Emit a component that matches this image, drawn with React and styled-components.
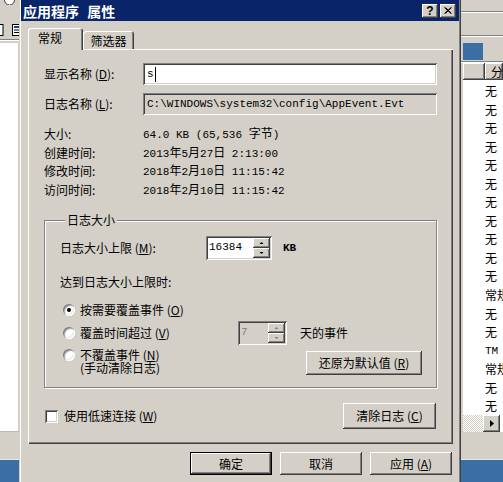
import React from "react";
import styled, { createGlobalStyle, css } from "styled-components";

const FACE = "#d4d0c8";
const CJK = `"Noto Sans CJK SC", "Noto Sans", sans-serif`;
const MONO = `"Liberation Mono", "Noto Sans CJK SC", monospace`;

const raised = css`
  box-shadow: inset -1px -1px #404040, inset 1px 1px #ffffff, inset -2px -2px #808080;
`;
const sunken = css`
  box-shadow: inset 1px 1px #808080, inset -1px -1px #ffffff, inset 2px 2px #404040,
    inset -2px -2px ${FACE};
`;

const Global = createGlobalStyle`
  html, body { margin: 0; padding: 0; background: ${FACE}; }
  body { font-family: ${CJK}; font-size: 12px; color: #000; }
  u { text-underline-offset: 1px; }
`;

const Screen = styled.div`
  display: flex;
  width: 503px;
  height: 482px;
  overflow: hidden;
  background: ${FACE};
`;

/* ---------- background window, left ---------- */
const SideLeft = styled.div`
  width: 19px;
  flex: none;
  display: flex;
  flex-direction: column;
`;
const Band = styled.div`
  height: ${(p) => p.$h}px;
  flex: none;
  display: flex;
  align-items: ${(p) => p.$align || "center"};
  gap: ${(p) => p.$gap || 0}px;
  padding-left: ${(p) => p.$pl || 0}px;
  background: ${(p) => p.$bg || FACE};
`;
const Etch = styled.div`
  height: 2px;
  flex: none;
  border-top: 1px solid #808080;
  border-bottom: 1px solid #ffffff;
  box-sizing: border-box;
`;
const WhiteList = styled.div`
  flex: none;
  height: ${(p) => p.$h}px;
  width: ${(p) => p.$w || "auto"};
  background: #fff;
`;
const Blue = styled.div`
  flex: 1;
  background: #3a6ea5;
  border-top: 1px solid #e8e8e8;
`;

/* ---------- background window, right ---------- */
const SideRight = styled.div`
  width: 42px;
  flex: none;
  display: flex;
  flex-direction: column;
  overflow: hidden;
`;
const BlueTab = styled.div`
  width: 20px;
  height: 17px;
  margin-left: 2px;
  background: #3a6ea5;
`;
const HeaderRow = styled.div`
  display: flex;
  height: 17px;
  flex: none;
  padding-left: 2px;
`;
const HeadCell = styled.div`
  ${raised};
  background: ${FACE};
  width: ${(p) => (p.$w ? p.$w + "px" : "auto")};
  flex: ${(p) => (p.$w ? "none" : 1)};
  padding-left: 6px;
  white-space: nowrap;
  overflow: hidden;
  line-height: 17px;
`;
const ListBox = styled.div`
  height: 335px;
  flex: none;
  margin-left: 2px;
  padding-top: 2px;
  box-sizing: border-box;
  background: #fff;
  overflow: hidden;
`;
const ListItem = styled.div`
  height: 18.55px;
  line-height: 18.55px;
  padding-left: 22px;
  white-space: nowrap;
  overflow: hidden;
  font-family: ${(p) => (p.$mono ? MONO : CJK)};
  font-size: ${(p) => (p.$mono ? "11px" : "12px")};
`;
const HScroll = styled.div`
  height: 17px;
  flex: none;
  display: flex;
  margin-left: 2px;
`;
const Track = styled.div`
  width: 20px;
  background: repeating-conic-gradient(#ffffff 0 25%, ${FACE} 0 50%) 0 0 / 2px 2px;
`;
const ScrollBtn = styled.div`
  ${raised};
  width: 17px;
  background: ${FACE};
  display: flex;
  align-items: center;
  justify-content: center;
`;

/* ---------- dialog ---------- */
const Dialog = styled.div`
  width: 442px;
  flex: none;
  height: 482px;
  box-sizing: border-box;
  padding: 0 2px;
  background: ${FACE};
  box-shadow: inset 1px 0 ${FACE}, inset 2px 0 #ffffff, inset -1px 0 #404040,
    inset -2px 0 #808080;
  display: flex;
  flex-direction: column;
`;
const TitleBar = styled.div`
  height: 21px;
  flex: none;
  background: #0a246a;
  display: flex;
  align-items: center;
  padding: 0 3px 0 2px;
  gap: 2px;
`;
const TitleText = styled.div`
  flex: 1;
  color: #fff;
  font-weight: 700;
  font-size: 14px;
  line-height: 16px;
  word-spacing: 5px;
  margin-top: 1px;
`;
const CapBtn = styled.div`
  ${raised};
  width: 16px;
  height: 14px;
  background: ${FACE};
  display: flex;
  align-items: center;
  justify-content: center;
  font-family: "Liberation Sans", sans-serif;
  font-weight: 700;
  font-size: 12px;
  line-height: 14px;
`;
const TabRow = styled.div`
  display: flex;
  align-items: flex-end;
  height: 22px;
  margin: 7px 0 -1px 7px;
  position: relative;
  z-index: 1;
`;
const Tab = styled.div`
  box-sizing: border-box;
  background: ${FACE};
  border-radius: 3px 3px 0 0;
  box-shadow: inset 1px 1px #ffffff, inset -1px 0 #404040, inset -2px 0 #808080;
  display: flex;
  align-items: center;
  line-height: 14px;
  ${(p) =>
    p.$active
      ? css`
          width: 55px;
          height: 22px;
          padding: 0 0 3px 10px;
        `
      : css`
          width: 51px;
          height: 18px;
          margin-bottom: 1px;
          justify-content: center;
          padding-top: 2px;
        `}
`;
const Panel = styled.div`
  width: 425px;
  height: 395px;
  flex: none;
  box-sizing: border-box;
  margin-left: 7px;
  padding: 14px 16px 0 16px;
  box-shadow: inset 1px 1px #ffffff, inset -1px -1px #404040, inset -2px -2px #808080;
  display: flex;
  flex-direction: column;
`;
const FieldRow = styled.div`
  display: flex;
  align-items: center;
  height: 22px;
  flex: none;
  margin-top: ${(p) => p.$mt || 0}px;
`;
const Label = styled.div`
  width: ${(p) => p.$w || 99}px;
  flex: none;
  line-height: 14px;
  white-space: nowrap;
`;
const TextBox = styled.div`
  ${sunken};
  flex: 1;
  height: 22px;
  box-sizing: border-box;
  padding-left: 4px;
  display: flex;
  align-items: center;
  background: ${(p) => (p.$readonly ? FACE : "#fff")};
  font-family: ${MONO};
  font-size: 11px;
  white-space: nowrap;
  overflow: hidden;
`;
const Caret = styled.span`
  width: 1px;
  height: 15px;
  background: #000;
  margin-left: 1px;
`;
const InfoGrid = styled.div`
  display: grid;
  grid-template-columns: 99px 1fr;
  grid-auto-rows: 18.5px;
  align-items: center;
  margin-top: 10px;
`;
const Value = styled.div`
  font-family: ${MONO};
  font-size: 11px;
  line-height: 14px;
  white-space: nowrap;
`;
const Han = styled.span`
  font-family: ${CJK};
  font-size: 12px;
`;
const Group = styled.fieldset`
  margin: 14px 0 0;
  padding: 0 14px 12px 15px;
  min-width: 0;
  border: 1px solid #808080;
  box-shadow: inset 1px 1px #ffffff, 1px 1px #ffffff;
`;
const Legend = styled.legend`
  margin-left: 5px;
  padding: 0 2px;
  line-height: 14px;
  background: ${FACE};
`;
const GRow = styled.div`
  display: flex;
  align-items: ${(p) => p.$align || "center"};
  height: ${(p) => p.$h}px;
  margin-top: ${(p) => p.$mt || 0}px;
  line-height: 14px;
`;
const Unit = styled.span`
  margin-left: 11px;
  font-family: ${MONO};
  font-size: 11px;
  font-weight: 700;
`;
const SpinBox = styled.div`
  ${sunken};
  width: ${(p) => p.$w}px;
  height: 24px;
  flex: none;
  box-sizing: border-box;
  padding: 2px;
  display: flex;
  background: ${(p) => (p.$disabled ? FACE : "#fff")};
`;
const SpinText = styled.span`
  flex: 1;
  padding-left: 1px;
  font-family: ${MONO};
  font-size: 11px;
  line-height: 18px;
  color: ${(p) => (p.$disabled ? "#808080" : "#000")};
`;
const SpinBtns = styled.div`
  width: 17px;
  display: flex;
  flex-direction: column;
`;
const SpinBtn = styled.div`
  ${raised};
  flex: 1;
  background: ${FACE};
  display: flex;
  align-items: center;
  justify-content: center;
`;
const RadioArea = styled.div`
  display: flex;
  align-items: ${(p) => p.$align || "center"};
  width: ${(p) => (p.$w ? p.$w + "px" : "auto")};
  flex: none;
  padding-left: 3px;
  box-sizing: border-box;
  gap: 5px;
`;
const Radio = styled.span`
  width: 12px;
  height: 12px;
  flex: none;
  margin-top: ${(p) => p.$mt || 0}px;
  border-radius: 50%;
  background: #fff;
  box-shadow: inset 1px 1px #808080, inset -1px -1px #ffffff, inset 2px 2px #b0b0b0,
    inset -2px -2px #e8e8e8;
  display: flex;
  align-items: center;
  justify-content: center;
  &::after {
    content: "";
    width: 4px;
    height: 4px;
    border-radius: 50%;
    background: ${(p) => (p.$checked ? "#000" : "transparent")};
  }
`;
const TwoLines = styled.div`
  display: flex;
  flex-direction: column;
  margin-top: -1px;
`;
const Line = styled.div`
  height: 13px;
  line-height: 13px;
  white-space: nowrap;
`;
const Btn = styled.div`
  ${(p) =>
    p.$default
      ? css`
          box-shadow: inset 0 0 0 1px #000, inset -2px -2px #404040, inset 2px 2px #ffffff,
            inset -3px -3px #808080;
        `
      : raised};
  width: ${(p) => p.$w}px;
  height: ${(p) => p.$h || 23}px;
  flex: none;
  margin: ${(p) => p.$m || 0};
  background: ${FACE};
  display: flex;
  align-items: center;
  justify-content: center;
  line-height: 14px;
  white-space: nowrap;
`;
const Footer = styled.div`
  display: flex;
  align-items: center;
  justify-content: space-between;
  height: 26px;
  margin-top: 15px;
`;
const CheckRow = styled.div`
  display: flex;
  align-items: center;
  gap: 6px;
  margin-left: 1px;
  line-height: 14px;
`;
const CheckBox = styled.span`
  ${sunken};
  width: 13px;
  height: 13px;
  background: #fff;
`;
const ButtonBar = styled.div`
  display: flex;
  justify-content: flex-end;
  gap: 8px;
  margin-top: 8px;
  padding-right: 7px;
`;

const Tri = ({ up, color = "#000" }) => (
  <svg width="5" height="4" viewBox="0 0 5 4">
    <path d={up ? "M2.5 1L0.5 3h4z" : "M0.5 1h4L2.5 3z"} fill={color} />
  </svg>
);

const Spin = ({ w, value, disabled }) => (
  <SpinBox $w={w} $disabled={disabled}>
    <SpinText $disabled={disabled}>{value}</SpinText>
    <SpinBtns>
      <SpinBtn>
        <Tri up color={disabled ? "#808080" : "#000"} />
      </SpinBtn>
      <SpinBtn>
        <Tri color={disabled ? "#808080" : "#000"} />
      </SpinBtn>
    </SpinBtns>
  </SpinBox>
);

const rightItems = [
  "无", "无", "无", "无", "无", "无", "无", "无", "无", "无", "无",
  "常规", "无", "无", "TM", "常规", "无", "无",
];

export default function App() {
  return (
    <Screen>
      <Global />
      <SideLeft>
        <Band $h={20} $align="flex-start" $pl={4}>
          <svg width="11" height="5" viewBox="0 0 11 5">
            <path d="M0.5 0 A5 5 0 0 0 10.5 0" fill="#fff" stroke="#404040" />
          </svg>
        </Band>
        <Band $h={19} $gap={8}>
          <svg width="4" height="12" viewBox="0 0 4 12">
            <rect x="-1" y="0.5" width="4" height="11" fill="#fff" stroke="#000" />
          </svg>
          <svg width="7" height="12" viewBox="0 0 7 12">
            <rect x="0.5" y="0.5" width="7" height="11" fill="#fff" stroke="#000" />
            <rect x="2" y="2" width="5" height="2" fill="#1f3f9f" />
            <rect x="2" y="5.5" width="5" height="1" fill="#000" />
            <rect x="2" y="8" width="5" height="1" fill="#000" />
          </svg>
        </Band>
        <Etch />
        <Band $h={2} />
        <Band $h={388}>
          <WhiteList $h={388} $w="18px" />
        </Band>
        <Band $h={1} $bg="#b8b8b8" />
        <Band $h={27} />
        <Blue />
      </SideLeft>

      <Dialog>
        <TitleBar>
          <TitleText>应用程序 属性</TitleText>
          <CapBtn>?</CapBtn>
          <CapBtn>
            <svg width="8" height="7" viewBox="0 0 8 7">
              <path d="M0.5 0.5l6.5 6M1.5 0.5l6 6M7 0.5l-6.5 6M7.5 0.5l-6 6" stroke="#000" strokeWidth="1" />
            </svg>
          </CapBtn>
        </TitleBar>

        <TabRow>
          <Tab $active>常规</Tab>
          <Tab>筛选器</Tab>
        </TabRow>

        <Panel>
          <FieldRow>
            <Label>
              显示名称 (<u>D</u>):
            </Label>
            <TextBox>
              s<Caret />
            </TextBox>
          </FieldRow>
          <FieldRow $mt={8}>
            <Label>
              日志名称 (<u>L</u>):
            </Label>
            <TextBox $readonly>C:\WINDOWS\system32\config\AppEvent.Evt</TextBox>
          </FieldRow>

          <InfoGrid>
            <Label>大小:</Label>
            <Value>
              64.0 KB (65,536 <Han>字节</Han>)
            </Value>
            <Label>创建时间:</Label>
            <Value>
              2013<Han>年</Han>5<Han>月</Han>27<Han>日</Han> 2:13:00
            </Value>
            <Label>修改时间:</Label>
            <Value>
              2018<Han>年</Han>2<Han>月</Han>10<Han>日</Han> 11:15:42
            </Value>
            <Label>访问时间:</Label>
            <Value>
              2018<Han>年</Han>2<Han>月</Han>10<Han>日</Han> 11:15:42
            </Value>
          </InfoGrid>

          <Group>
            <Legend>日志大小</Legend>
            <GRow $h={24} $mt={9}>
              <Label $w={146}>
                日志大小上限 (<u>M</u>):
              </Label>
              <Spin w={66} value="16384" />
              <Unit>KB</Unit>
            </GRow>
            <GRow $h={14} $mt={15}>
              达到日志大小上限时:
            </GRow>
            <GRow $h={18} $mt={12}>
              <RadioArea>
                <Radio $checked />
                <span>
                  按需要覆盖事件 (<u>O</u>)
                </span>
              </RadioArea>
            </GRow>
            <GRow $h={24} $mt={2}>
              <RadioArea $w={178}>
                <Radio />
                <span>
                  覆盖时间超过 (<u>V</u>)
                </span>
              </RadioArea>
              <Spin w={49} value="7" disabled />
              <span style={{ marginLeft: 13 }}>天的事件</span>
            </GRow>
            <GRow $h={26} $mt={4} $align="flex-start">
              <RadioArea $align="flex-start">
                <Radio $mt={0} />
                <TwoLines>
                  <Line>
                    不覆盖事件 (<u>N</u>)
                  </Line>
                  <Line>(手动清除日志)</Line>
                </TwoLines>
              </RadioArea>
              <Btn $w={116} $h={24} $m="2px 0 0 auto">
                还原为默认值 (<u>R</u>)
              </Btn>
            </GRow>
          </Group>

          <Footer>
            <CheckRow>
              <CheckBox />
              <span>
                使用低速连接 (<u>W</u>)
              </span>
            </CheckRow>
            <Btn $w={93} $h={26} $m="0 1px 0 0">
              清除日志 (<u>C</u>)
            </Btn>
          </Footer>
        </Panel>

        <ButtonBar>
          <Btn $w={82} $default>
            确定
          </Btn>
          <Btn $w={82}>取消</Btn>
          <Btn $w={82}>
            应用 (<u>A</u>)
          </Btn>
        </ButtonBar>
      </Dialog>

      <SideRight>
        <Band $h={11} />
        <Etch />
        <Band $h={22} />
        <Etch />
        <Band $h={6} />
        <Band $h={18} $align="flex-start">
          <BlueTab />
        </Band>
        <Etch />
        <HeaderRow>
          <HeadCell $w={16} />
          <HeadCell>分类</HeadCell>
        </HeaderRow>
        <ListBox>
          {rightItems.map((t, i) => (
            <ListItem key={i} $mono={t === "TM"}>
              {t}
            </ListItem>
          ))}
        </ListBox>
        <HScroll>
          <Track />
          <ScrollBtn>
            <svg width="4" height="7" viewBox="0 0 4 7">
              <path d="M0 0l4 3.5L0 7z" fill="#000" />
            </svg>
          </ScrollBtn>
          <WhiteList $h={17} $w="3px" />
        </HScroll>
        <Band $h={27} />
        <Blue />
      </SideRight>
    </Screen>
  );
}
